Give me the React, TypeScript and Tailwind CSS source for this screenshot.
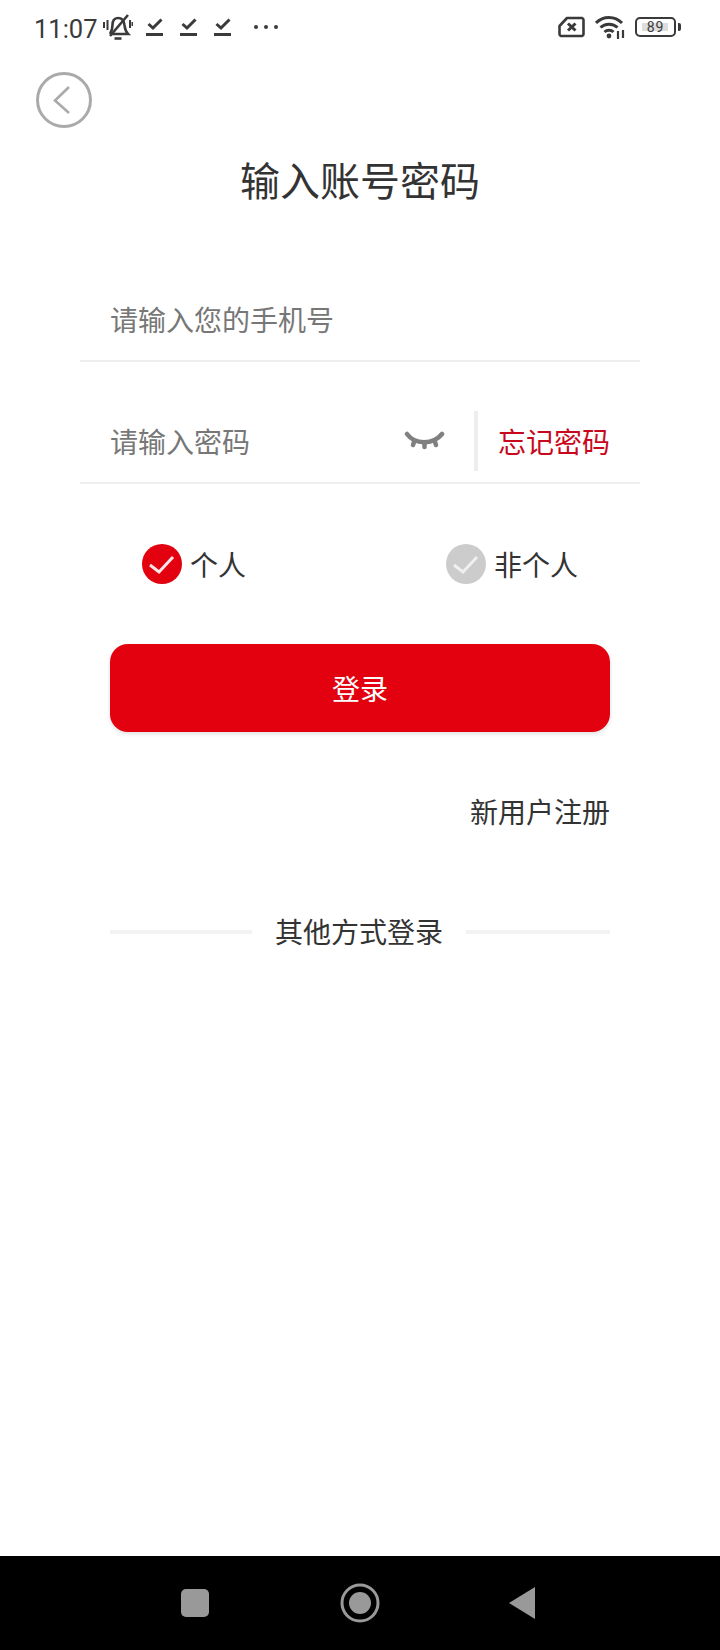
const font = { fontFamily: '"Roboto", "Noto Sans CJK SC", sans-serif' };
const cjk = '"Noto Sans CJK SC", sans-serif';

function Task() {
  return (
    <svg width="17" height="20" viewBox="0 0 17 20" className="block">
      <path d="M2.5 7 L7 11 L15.500 2.500" fill="none" stroke="#3a3a3a" strokeWidth="3" />
      <rect x="0" y="16" width="17" height="3" fill="#3a3a3a" />
    </svg>
  );
}

function Radio({ on, label }: { on: boolean; label: string }) {
  return (
    <div className="flex items-center gap-[8px]">
      <svg width="40" height="40" viewBox="0 0 40 40" className="block">
        <circle cx="20" cy="20" r="20" fill={on ? '#e3000f' : '#cccccc'} />
        <path d="M8 21 L17 28 L31 13" fill="none" stroke="#ffffff" strokeOpacity={on ? 0.9 : 0.7} strokeWidth="3" />
      </svg>
      <span className="text-[28px] leading-[40px] text-[#333333]">{label}</span>
    </div>
  );
}

export default function App() {
  return (
    <div className="flex h-[1650px] w-[720px] flex-col bg-white" style={{ fontFamily: cjk }}>
      <div className="flex h-[54px] shrink-0 items-center justify-between pl-[34px] pr-[39px]">
        <div className="flex items-center">
          <span className="mb-[-2px] mt-[2px] text-[25.5px] leading-[54px] text-[#3a3a3a]" style={font}>11:07</span>
          <svg width="30" height="26" viewBox="0 0 30 26" className="ml-[5px] block">
            <g fill="none" stroke="#3a3a3a" strokeWidth="2.6">
              <path d="M8 20 H25 C22 17 22 15 21.5 11 C21 6 19 4 15 4 C11 4 9.5 7 9.5 11 C9.5 15 9 17 7 20" />
              <path d="M7 22 L25 1" />
              <path d="M1 8 V14 M4.5 6 V16 M27 6 V14 M29.5 8 V12" strokeWidth="2" />
              <path d="M11.5 24.5 H18.5" />
            </g>
          </svg>
          <div className="ml-[13px] flex gap-[17px]"><Task /><Task /><Task /></div>
          <div className="ml-[23px] flex gap-[6px]">
            <span className="h-[4px] w-[4px] rounded-full bg-[#3a3a3a]" />
            <span className="h-[4px] w-[4px] rounded-full bg-[#3a3a3a]" />
            <span className="h-[4px] w-[4px] rounded-full bg-[#3a3a3a]" />
          </div>
        </div>
        <div className="flex items-center">
          <svg width="27" height="22" viewBox="0 0 27 22" className="block">
            <path d="M9 2 H24 A2 2 0 0 1 25.5 4 V18 A2 2 0 0 1 24 20 H3 A2 2 0 0 1 1.5 18 V10 Z" fill="none" stroke="#3a3a3a" strokeWidth="2.6" strokeLinejoin="round" />
            <path d="M10 7.5 L17.5 14.5 M17.5 7.5 L10 14.5" stroke="#3a3a3a" strokeWidth="3" />
          </svg>
          <svg width="30" height="24" viewBox="0 0 30 24" className="ml-[10px] block">
            <g fill="none" stroke="#3a3a3a" strokeWidth="3">
              <path d="M1 8 C8 0.5 20 0.5 27 8" />
              <path d="M5.5 12.5 C10 8 18 8 22.5 12.5" />
              <path d="M9.5 17 C12 14.5 16 14.5 18.5 17" />
            </g>
            <circle cx="14" cy="21" r="2.4" fill="#3a3a3a" />
            <path d="M23 16 V24 M28 15 V23" stroke="#3a3a3a" strokeWidth="2.2" />
          </svg>
          <div className="relative ml-[10px] flex h-[20px] w-[41px] items-center justify-center rounded-[5px] border-2 border-[#3a3a3a]">
            <span className="absolute left-[5px] top-[4px] h-[8px] w-[26px] bg-[#dddddd]" />
            <span className="relative text-[14px] leading-[14px] tracking-[1px] text-[#3a3a3a]" style={font}>89</span>
          </div>
          <span className="ml-[2px] h-[8px] w-[3px] rounded-r-[2px] bg-[#3a3a3a]" />
        </div>
      </div>

      <div className="flex flex-1 flex-col">
        <div className="pl-[36px] pt-[18px]">
          <svg width="56" height="56" viewBox="0 0 56 56" className="block">
            <circle cx="28" cy="28" r="26.5" fill="none" stroke="#aaaaaa" strokeWidth="3" />
            <path d="M33 15 L19 28.5 L33 41" fill="none" stroke="#aaaaaa" strokeWidth="2.6" />
          </svg>
        </div>

        <h1 className="mt-[21px] text-center text-[40px] font-normal leading-[60px] text-[#333333]">输入账号密码</h1>

        <div className="mx-[80px] mt-[73px] flex h-[80px] items-center border-b-2 border-[#eeeeee] pb-[4px] pl-[30px]">
          <span className="text-[28px] leading-[40px] text-[#777777]">请输入您的手机号</span>
        </div>

        <div className="mx-[80px] mt-[48px] flex h-[74px] items-center border-b-2 border-[#eeeeee] pb-[10px] pl-[30px]">
          <span className="text-[28px] leading-[40px] text-[#777777]">请输入密码</span>
          <svg width="42" height="24" viewBox="0 0 42 24" className="ml-auto mt-[2px] block">
            <path d="M3 4 C11 15 29 15 38 4" fill="none" stroke="#808080" strokeWidth="4.5" strokeLinecap="round" />
            <path d="M10 12 L9 15 M20.500 14 V17 M31 12 L32 15" stroke="#808080" strokeWidth="4.5" strokeLinecap="round" />
          </svg>
          <span className="ml-[28px] h-[60px] w-[4px] bg-[#eeeeee]" />
          <span className="ml-[20px] mr-[30px] text-[28px] leading-[40px] text-[#c8091d]">忘记密码</span>
        </div>

        <div className="mt-[60px] flex justify-between px-[142px]">
          <Radio on label="个人" />
          <Radio on={false} label="非个人" />
        </div>

        <button className="mx-[110px] mt-[60px] h-[88px] rounded-[18px] bg-[#e3000f] text-[28px] text-white shadow-[0_2px_4px_rgba(0,0,0,0.12)]">登录</button>

        <div className="mx-[110px] mt-[59px] text-right text-[28px] leading-[40px] text-[#333333]">新用户注册</div>

        <div className="mx-[110px] mt-[80px] flex items-center">
          <span className="mt-[2px] h-[4px] w-[142px] bg-[#f3f3f3]" />
          <span className="ml-[23px] text-[28px] leading-[40px] text-[#333333]">其他方式登录</span>
          <span className="ml-[23px] mt-[2px] h-[4px] flex-1 bg-[#f3f3f3]" />
        </div>
      </div>

      <div className="flex h-[94px] shrink-0 items-center bg-black pl-[181px]">
        <span className="h-[28px] w-[28px] rounded-[5px] bg-[#999999]" />
        <svg width="40" height="40" viewBox="0 0 40 40" className="ml-[131px] block">
          <circle cx="20" cy="20" r="18" fill="none" stroke="#999999" strokeWidth="3" />
          <circle cx="20" cy="20" r="11" fill="#999999" />
        </svg>
        <svg width="28" height="34" viewBox="0 0 28 34" className="ml-[128px] block">
          <path d="M27 1 V33 L1 17 Z" fill="#999999" />
        </svg>
      </div>
    </div>
  );
}
